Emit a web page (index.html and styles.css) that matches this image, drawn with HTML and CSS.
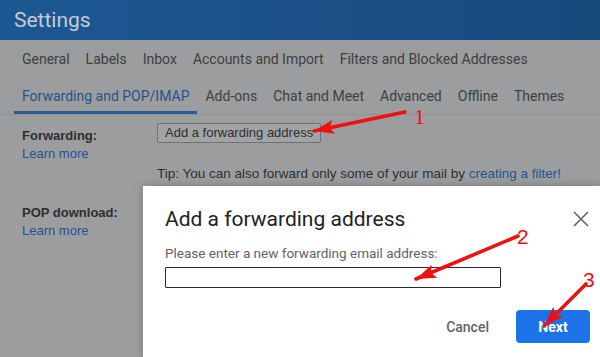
FILE: index.html
```html
<!DOCTYPE html>
<html lang="en">
<head>
  <meta charset="UTF-8" />
  <title>Settings</title>
  <link rel="stylesheet" href="styles.css">
</head>
<body>
  <div class="page">
    <header class="topbar"><h1>Settings</h1></header>

    <nav class="tabs">
      <div class="tab-row">
        <a href="#">General</a>
        <a href="#">Labels</a>
        <a href="#">Inbox</a>
        <a href="#">Accounts and Import</a>
        <a href="#">Filters and Blocked Addresses</a>
      </div>
      <div class="tab-row">
        <a href="#" class="active">Forwarding and POP/IMAP</a>
        <a href="#">Add-ons</a>
        <a href="#">Chat and Meet</a>
        <a href="#">Advanced</a>
        <a href="#">Offline</a>
        <a href="#">Themes</a>
      </div>
    </nav>

    <section class="settings">
      <div class="row">
        <div class="label">
          <b>Forwarding:</b>
          <a href="#">Learn more</a>
        </div>
        <div class="value">
          <button class="fwd-btn">Add a forwarding address</button>
          <p class="tip">Tip: You can also forward only some of your mail by <a href="#">creating a filter!</a></p>
        </div>
      </div>
      <div class="row pop">
        <div class="label">
          <b>POP download:</b>
          <a href="#">Learn more</a>
        </div>
      </div>
    </section>

    <div class="dialog">
      <div class="dialog-head">
        <h2>Add a forwarding address</h2>
        <svg class="close" width="16" height="16" viewBox="0 0 16 16">
          <path d="M1 1L15 15M15 1L1 15" stroke="#5f6368" stroke-width="1.6" fill="none"/>
        </svg>
      </div>
      <label class="field-label">Please enter a new forwarding email address:</label>
      <div class="field"></div>
      <div class="actions">
        <button class="cancel">Cancel</button>
        <button class="next">Next</button>
      </div>
    </div>

    <svg class="marks" width="600" height="357" viewBox="0 0 600 357">
      <defs>
        <marker id="head" markerUnits="userSpaceOnUse" markerWidth="22" markerHeight="14" refX="20" refY="7" orient="auto">
          <path d="M0,0 L20,7 L0,14 L4,7 z" fill="#ee1111"/>
        </marker>
      </defs>
      <g stroke="#ee1111" stroke-width="3.6" fill="none" stroke-linecap="round">
        <path d="M405 112 L314 131" marker-end="url(#head)"/>
        <path d="M518 236 L416 279" marker-end="url(#head)"/>
        <path d="M586 284 L544 326" marker-end="url(#head)"/>
      </g>
      <g fill="#ee1111" class="num">
        <text x="414" y="124" class="serif">1</text>
        <text x="517" y="244">2</text>
        <text x="583" y="287">3</text>
      </g>
    </svg>
  </div>
</body>
</html>
```

FILE: styles.css
```css
:root {
  --dim-bg: #9c9d9f;
  --dim-text: #3e3f41;
  --dim-link: #25548c;
  --blue: #1a73e8;
  --grey: #5f6368;
}
* { box-sizing: border-box; margin: 0; padding: 0; }
body { font-family: 'Liberation Sans', Arial, sans-serif; background: var(--dim-bg); }

.page { position: relative; width: 600px; height: 357px; overflow: hidden; background: var(--dim-bg); }

.topbar { height: 40px; background: linear-gradient(90deg, #1d5893, #184a7c); padding-left: 14px; display: flex; align-items: center; }
.topbar h1 { font-family: Roboto, sans-serif; font-weight: 400; font-size: 21px; color: #c4cbd3; }

.tabs { padding-left: 14px; border-bottom: 1px solid #919294; }
.tab-row { display: flex; height: 37px; }
.tab-row a { display: flex; align-items: center; padding: 0 8px; font-family: Roboto, sans-serif; font-size: 14px; color: var(--dim-text); text-decoration: none; border-bottom: 3px solid transparent; padding-top: 3px; }
.tab-row a.active { color: var(--dim-link); border-bottom-color: #2b5a95; }

.settings { padding: 10px 0 0 22px; font-size: 13px; color: #2e2f31; }
.row { display: grid; grid-template-columns: 135px 1fr; }
.label { display: flex; flex-direction: column; gap: 3px; padding-top: 3px; }
.label b { font-weight: 700; }
.label a, .tip a { color: var(--dim-link); text-decoration: none; }
.fwd-btn { font: inherit; font-size: 13px; color: #2e2f31; background: #a2a3a5; border: 1px solid #707173; border-radius: 2px; height: 20px; padding: 0 7px; margin-top: -3px; }
.tip { margin-top: 23px; font-size: 13.5px; }
.row.pop { margin-top: 21px; }

.dialog { position: absolute; left: 143px; top: 186px; right: 0; bottom: 0; background: #fff; box-shadow: 0 0 8px rgba(0,0,0,0.25); padding: 21px 0 0 22px; font-family: Roboto, sans-serif; }
.dialog-head { display: flex; justify-content: space-between; align-items: center; padding-right: 11px; }
.dialog-head h2 { font-weight: 400; font-size: 21px; color: #202124; }
.field-label { display: block; margin-top: 14px; font-size: 13.5px; color: var(--grey); }
.field { width: 336px; height: 21px; border: 1px solid #2a2a2a; border-radius: 1px; margin-top: 6px; }
.actions { display: flex; justify-content: flex-end; align-items: center; gap: 13px; margin-top: 22px; padding-right: 10px; }
.actions button { font-family: Roboto, sans-serif; font-size: 14px; border: none; border-radius: 4px; height: 33px; }
.cancel { background: none; color: var(--grey); padding: 0 14px; font-weight: 500; }
.next { background: var(--blue); color: #fff; font-weight: 700; width: 74px; }

.marks { position: absolute; left: 0; top: 0; pointer-events: none; }
.num text { font-family: 'Liberation Sans', Arial, sans-serif; font-size: 21px; }
.num text.serif { font-family: 'Liberation Serif', serif; font-size: 22px; }
```
